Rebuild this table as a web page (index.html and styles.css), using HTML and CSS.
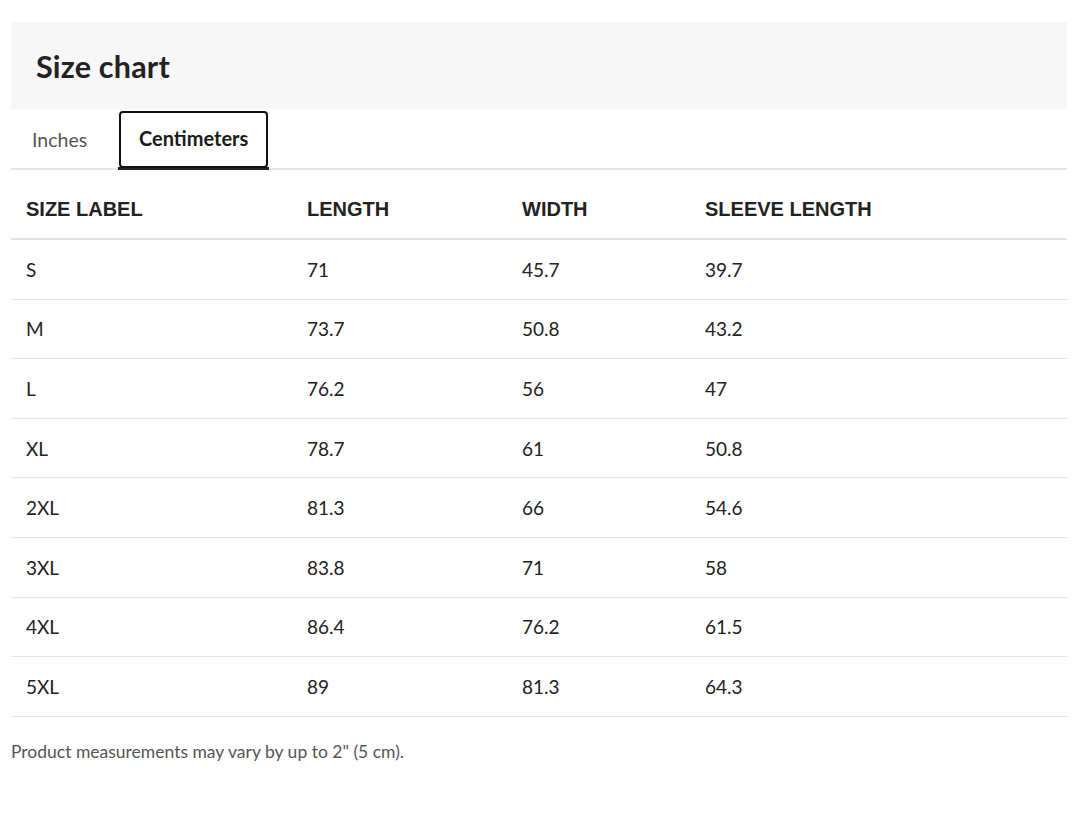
FILE: index.html
```html
<!DOCTYPE html>
<html lang="en">
<head>
<meta charset="utf-8">
<title>Size chart</title>
<link rel="stylesheet" href="styles.css">
</head>
<body>
<div class="chart">
  <div class="chart-head">
    <h2 class="chart-title">Size chart</h2>
  </div>
  <div class="tabs">
    <button class="tab">Inches</button>
    <button class="tab tab-active">Centimeters</button>
  </div>
  <table class="sizes">
    <thead>
      <tr>
        <th class="c1">SIZE LABEL</th>
        <th class="c2">LENGTH</th>
        <th class="c3">WIDTH</th>
        <th class="c4">SLEEVE LENGTH</th>
      </tr>
    </thead>
    <tbody>
      <tr><td>S</td><td>71</td><td>45.7</td><td>39.7</td></tr>
      <tr><td>M</td><td>73.7</td><td>50.8</td><td>43.2</td></tr>
      <tr><td>L</td><td>76.2</td><td>56</td><td>47</td></tr>
      <tr><td>XL</td><td>78.7</td><td>61</td><td>50.8</td></tr>
      <tr><td>2XL</td><td>81.3</td><td>66</td><td>54.6</td></tr>
      <tr><td>3XL</td><td>83.8</td><td>71</td><td>58</td></tr>
      <tr><td>4XL</td><td>86.4</td><td>76.2</td><td>61.5</td></tr>
      <tr><td>5XL</td><td>89</td><td>81.3</td><td>64.3</td></tr>
    </tbody>
  </table>
  <p class="note">Product measurements may vary by up to 2" (5 cm).</p>
</div>
</body>
</html>
```
FILE: styles.css
```css
html, body {
  margin: 0;
  padding: 0;
  background: #fff;
}
body {
  font-family: "Lato", "Liberation Sans", sans-serif;
  color: #222;
}
.chart {
  width: 1056px;
  margin: 22px 0 0 11px;
}
.chart-head {
  background: #f7f7f7;
  height: 87px;
  display: flex;
  align-items: center;
  padding-left: 25px;
}
.chart-title {
  margin: 0;
  font-size: 30.5px;
  font-weight: 700;
  color: #222;
  letter-spacing: 0.2px;
}
.tabs {
  display: flex;
  gap: 10px;
  border-bottom: 2px solid #e5e5e5;
  height: 59px;
}
.tab {
  background: none;
  border: none;
  font-family: inherit;
  font-size: 19.5px;
  color: #555;
  padding: 0 21px;
  height: 61px;
  cursor: pointer;
}
.tab-active {
  position: relative;
  color: #1a1a1a;
  font-weight: 700;
  font-size: 20px;
  border-bottom: 3px solid #222;
  padding: 0 18px;
  width: 151px;
}
.tab-active::after {
  content: "";
  position: absolute;
  top: 2px;
  left: 1px;
  right: 1px;
  bottom: -1px;
  border: 2px solid #111;
  border-radius: 4px;
}
.sizes {
  width: 100%;
  border-collapse: collapse;
  table-layout: fixed;
}
.c1 { width: 251px; }
.c2 { width: 185px; }
.c3 { width: 153px; }
.sizes th {
  font-family: "Liberation Sans", Arial, sans-serif;
  font-weight: 700;
  font-size: 20px;
  text-align: left;
  color: #222;
  padding: 10px 15px 0;
  height: 58px;
  border-bottom: 2px solid #e3e3e3;
}
.sizes td {
  font-size: 19px;
  padding: 0 15px;
  height: 58.6px;
  border-bottom: 1px solid #e5e5e5;
  color: #222;
}
.note {
  margin: 24px 0 0;
  font-size: 17.5px;
  color: #555;
}
```
